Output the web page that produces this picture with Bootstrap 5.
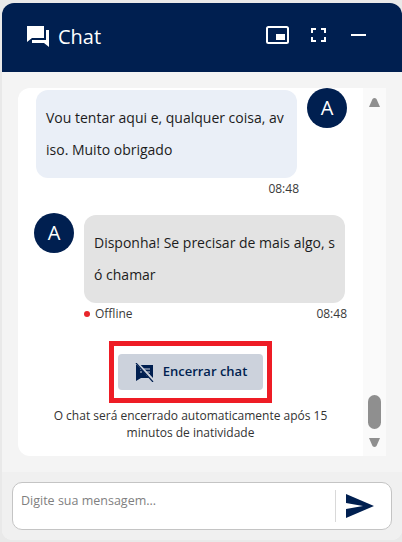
<!DOCTYPE html>
<html lang="pt-BR">
<head>
    <meta charset="UTF-8">
    <title>Chat</title>
    <link href="https://cdn.jsdelivr.net/npm/bootstrap@5.3.0/dist/css/bootstrap.min.css" rel="stylesheet">
    <style>
        html, body { height: 100%; overflow: hidden; }
        body { background: #e9e9e9; font-family: "Open Sans", "Noto Sans", sans-serif; color: #1c1c1c; padding: 3px 0 2px 2px; }
        .chat-window { height: 537px; border-radius: 12px 12px 10px 10px; overflow: hidden; background: #f4f4f4; }
        .chat-header { height: 69px; background: #001f50; color: #fff; padding: 0 36px 6px 25px; }
        .chat-brand { margin-top: 4px; }
        .chat-title { font-size: 20px; line-height: 1; margin-left: 9px; }
        .head-icons { gap: 22px; }
        .head-min { margin-left: 3px; }
        .chat-main { height: 400px; padding: 16px; }
        .chat-panel { height: 368px; background: #fff; border-radius: 12px 0 0 12px; overflow: hidden; }
        .msg-col { width: 345px; }
        .msg-out { padding: 0 16px 0 18px; gap: 10px; }
        .msg-in { padding: 0 18px 0 16px; gap: 10px; margin-top: 16px; }
        .chat-avatar { width: 40px; height: 40px; background: #001f50; color: #fff; font-size: 20px; flex: none; }
        .bubble { width: 261px; height: 88px; border-radius: 12px; padding: 12px 10px 10px; font-size: 14px; line-height: 32px; word-break: break-all; }
        .bubble-out { background: #eaeff7; margin-top: 2px; }
        .bubble-in { background: #e3e3e3; margin-top: 2px; }
        .msg-meta { font-size: 12px; line-height: 16px; color: #3a3a3a; margin-top: 3px; }
        .meta-out { width: 263px; margin-left: 18px; }
        .meta-in { width: 263px; margin-left: 66px; }
        .status-dot { width: 6px; height: 6px; background: #e8262a; margin: 0 5px 1px 0; }
        .close-frame { width: 163px; height: 62px; border: 5px solid #ee1c25; margin-top: 19px; }
        .btn-close-chat { width: 145px; height: 36px; background: #ccd2dc; color: #001f50; font-size: 13px; font-weight: 600; border: 0; border-radius: 4px; padding: 0 0 0 1px; gap: 9px; }
        .auto-note { font-size: 12px; line-height: 17px; width: 290px; margin-top: 4px; color: #333; }
        .fake-scroll { width: 23px; background: #fafafa; padding: 10px 0 9px; }
        .scroll-thumb { width: 13px; height: 34px; background: #8f8f8f; border-radius: 7px; margin-bottom: 9px; }
        .chat-foot { height: 68px; background: #f0f0f0; padding: 10px; }
        .msg-box { height: 48px; background: #fff; border: 1px solid #c4c4c4; border-radius: 10px; padding: 7px 17px 7px 8px; }
        .msg-input { font-size: 12.5px; color: #333; padding: 0; height: 18px; margin-top: 2px; }
        .msg-input::placeholder { color: #7f7f7f; }
        .foot-sep { width: 1px; height: 32px; background: #d9d9d9; margin: 0 10px 0 0; }
    </style>
</head>
<body>

<div class="chat-window d-flex flex-column">
    <!-- Header -->
    <header class="chat-header d-flex align-items-center justify-content-between">
        <div class="chat-brand d-flex align-items-center">
            <svg width="22" height="21" viewBox="0 0 22 21" fill="#fff"><path d="M0 0h17v12H5l-5 4z"/><path d="M19 4h3v17l-5-4H5v-3h14z"/></svg>
            <span class="chat-title">Chat</span>
        </div>
        <div class="head-icons d-flex align-items-center">
            <svg width="23" height="18" viewBox="0 0 23 18" fill="none"><rect x="1" y="1" width="21" height="16" rx="1.5" stroke="#fff" stroke-width="2"/><rect x="10" y="8" width="9" height="6" fill="#fff"/></svg>
            <svg width="15" height="14" viewBox="0 0 15 14" fill="none" stroke="#fff" stroke-width="2"><path d="M1 5V1h4M10 1h4v4M14 9v4h-4M5 13H1V9"/></svg>
            <svg class="head-min" width="15" height="2" viewBox="0 0 15 2"><rect width="15" height="2" fill="#fff"/></svg>
        </div>
    </header>

    <!-- Messages -->
    <main class="chat-main">
        <div class="chat-panel d-flex">
            <div class="msg-col d-flex flex-column">
                <div class="msg-out d-flex">
                    <div class="bubble bubble-out">Vou tentar aqui e, qualquer coisa, aviso. Muito obrigado</div>
                    <div class="chat-avatar rounded-circle d-flex align-items-center justify-content-center">A</div>
                </div>
                <div class="msg-meta meta-out text-end">08:48</div>

                <div class="msg-in d-flex">
                    <div class="chat-avatar rounded-circle d-flex align-items-center justify-content-center">A</div>
                    <div class="bubble bubble-in">Disponha! Se precisar de mais algo, só chamar</div>
                </div>
                <div class="msg-meta meta-in d-flex justify-content-between">
                    <span class="d-flex align-items-center"><span class="status-dot rounded-circle"></span>Offline</span>
                    <span>08:48</span>
                </div>

                <div class="close-frame align-self-center d-flex align-items-center justify-content-center">
                    <button type="button" class="btn btn-close-chat d-flex align-items-center justify-content-center">
                        <svg width="19" height="19" viewBox="0 0 19 19"><path d="M1 2h17v13H6l-5 3z" fill="#001f50"/><path d="M5 6h2M9 6h6M5 9h2M9 9h6M11 12h4" stroke="#ccd2dc" stroke-width="1.200"/><path d="M2 0l17 18" stroke="#ccd2dc" stroke-width="2.600"/><path d="M1 0l17 19" stroke="#001f50" stroke-width="1.200"/></svg>
                        Encerrar chat
                    </button>
                </div>
                <div class="auto-note align-self-center text-center">O chat será encerrado automaticamente após 15 minutos de inatividade</div>
            </div>
            <div class="fake-scroll d-flex flex-column align-items-center justify-content-between">
                <svg width="11" height="9" viewBox="0 0 11 9"><path d="M3.500 1Q5.500-1 7.500 1L11 9H0z" fill="#8f8f8f"/></svg>
                <div class="d-flex flex-column align-items-center">
                    <div class="scroll-thumb"></div>
                    <svg width="11" height="9" viewBox="0 0 11 9"><path d="M0 0h11L7.500 8Q5.500 10 3.500 8z" fill="#8f8f8f"/></svg>
                </div>
            </div>
        </div>
    </main>

    <!-- Input -->
    <footer class="chat-foot">
        <div class="msg-box d-flex">
            <input type="text" class="msg-input form-control border-0 shadow-none bg-transparent flex-grow-1 rounded-0" placeholder="Digite sua mensagem...">
            <div class="foot-sep flex-shrink-0"></div>
            <svg class="flex-shrink-0 mt-1" width="28" height="24" viewBox="0 0 28 24"><path d="M0 0l28 12L0 24V15l17-3L0 9z" fill="#001f50"/></svg>
        </div>
    </footer>
</div>

<script src="https://cdn.jsdelivr.net/npm/bootstrap@5.3.0/dist/js/bootstrap.bundle.min.js"></script>
</body>
</html>
